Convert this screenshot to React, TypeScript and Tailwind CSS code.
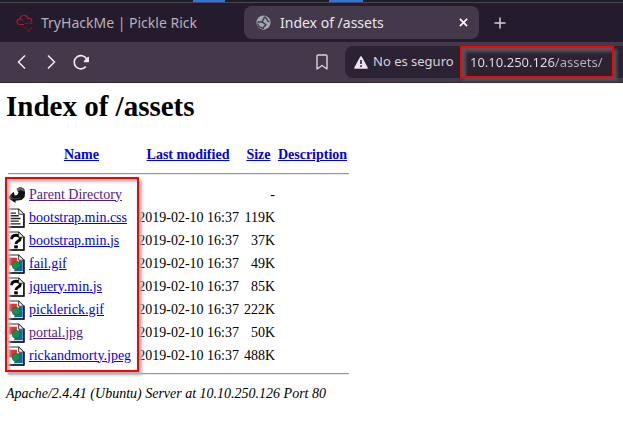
import React from "react";

type Kind = "back" | "text" | "unknown" | "image";

type Entry = {
  name: string;
  kind: Kind;
  modified?: string;
  size: string;
  visited?: boolean;
};

const stamp = "2019-02-10 16:37";

const entries: Entry[] = [
  { name: "Parent Directory", kind: "back", size: "-", visited: true },
  { name: "bootstrap.min.css", kind: "text", modified: stamp, size: "119K" },
  { name: "bootstrap.min.js", kind: "unknown", modified: stamp, size: "37K" },
  { name: "fail.gif", kind: "image", modified: stamp, size: "49K" },
  { name: "jquery.min.js", kind: "unknown", modified: stamp, size: "85K" },
  { name: "picklerick.gif", kind: "image", modified: stamp, size: "222K" },
  { name: "portal.jpg", kind: "image", modified: stamp, size: "50K", visited: true },
  { name: "rickandmorty.jpeg", kind: "image", modified: stamp, size: "488K" },
];

function FileIcon({ kind }: { kind: Kind }) {
  if (kind === "back") {
    return (
      <svg viewBox="0 0 20 22" className="block h-5 w-[18px]" aria-hidden="true">
        <path d="M11 4 15 2 19 4 20 8 19.5 13.5 16 16.5 9.5 17.5 9.5 20 0.5 14 7.5 7.5 8.5 11.5 11.5 11 13 9Z" fill="#111" />
        <path d="M10.5 4 14.5 2 18.5 4 19.5 7.5 15 5.5 12 7.5Z" fill="#666" />
        <path d="M12 9.5 14.5 7.5 19.5 8.5 19 13 16 15.5 11 16Z" fill="#111" />
        <path d="M2 14.2 8.5 15.2 15 14.5" fill="none" stroke="#555" strokeWidth="0.8" />
      </svg>
    );
  }
  return (
    <svg viewBox="0 0 20 22" className="block h-5 w-[18px]" aria-hidden="true">
      <path d="M1 1H13L18.8 6.8V21H1Z" fill="#fff" stroke="#333" strokeWidth="1.2" />
      <path d="M18.8 6V21.1H1" fill="none" stroke="#111" strokeWidth="1.6" />
      {kind === "text" && (
        <path d="M4 5.5H10M4 8.5H13M4 11.5H15M4 14.5H13M4 17.5H15" stroke="#222" strokeWidth="1.5" />
      )}
      {kind === "unknown" && (
        <>
          <path d="M5 9C5 3.2 14.8 3.2 14.8 8.2C14.8 11.2 10 11 10 14.2" fill="none" stroke="#000" strokeWidth="3.2" />
          <rect x="8" y="15.8" width="4" height="3.4" fill="#000" />
        </>
      )}
      {kind === "image" && (
        <>
          <rect x="2" y="4" width="9" height="8.5" fill="#ef2b33" />
          <path d="M13.5 7.5H17.5V19H7.5Z" fill="#1764b0" />
          <circle cx="10" cy="12.4" r="4.4" fill="#119447" stroke="#155c37" strokeWidth="0.6" />
        </>
      )}
      <path d="M13 1V6.8H18.8Z" fill="#fff" stroke="#222" strokeWidth="1" />
    </svg>
  );
}

function CloudLogo() {
  return (
    <svg viewBox="0 0 18 18" className="h-[18px] w-[18px] shrink-0" fill="none" stroke="#b51622" aria-hidden="true">
      <path d="M8 10.5H4C0 10.5 0.2 5.2 4 5.2C4.5 0.5 11 0.2 12 4.5C15 3.8 16.5 6 15.5 8" strokeWidth="1.2" />
      <path d="M4 5.2C6 4.8 6.8 5.8 7 7" strokeWidth="1" />
      <path d="M9 9.3H12M13 9.3H16.5M8.5 14H11M12 15.3H13.5M14 14.2H16.5M11 17H14" strokeWidth="1.1" strokeOpacity="0.75" />
    </svg>
  );
}

function Globe() {
  return (
    <svg viewBox="0 0 16 16" className="h-[15px] w-[15px] shrink-0" aria-hidden="true">
      <circle cx="8" cy="8" r="7.6" fill="#a2a7ae" />
      <path d="M10 1.8C6.5 3.2 9.8 4.8 7.3 5.6C6.5 6 7 7.2 5.5 7.4H1.7C3.8 7.8 8.2 6.6 8.4 9C8.6 10 10.5 9 10.6 10.4C10.4 12 7.6 11.8 7.6 14.2C4.2 13.8 2.2 11.6 1.7 9M10 1.8C10 4 12 3.8 12 5.2C11.8 6.8 13.4 6 14 7.6" fill="none" stroke="#43394b" strokeWidth="1.5" />
    </svg>
  );
}

const iconButton = "flex h-8 w-[30px] shrink-0 items-center justify-center text-[#f0edf2]";

function BrowserChrome() {
  return (
    <header className="bg-[#241b2d] font-['Noto_Sans',sans-serif] text-[#e9e5ec]">
      <div className="flex h-[3px] border-b border-[#4a484d] bg-[#1c1e27]">
        <div className="ml-[193px] w-8 bg-[#2776ee]" />
        <div className="ml-[104px] w-[34px] bg-[#2776ee]" />
      </div>
      <div className="flex h-[39px] items-center">
        <button type="button" className="flex h-[33px] w-[244px] shrink-0 items-center gap-[7px] pl-4 text-[14px] whitespace-nowrap text-[#b7b1bb]">
          <CloudLogo />
          TryHackMe | Pickle Rick
        </button>
        <div className="flex h-[33px] w-[235px] shrink-0 items-center rounded-lg bg-[#43394b] pr-2 pl-3">
          <button type="button" className="flex flex-1 items-center gap-[9px] text-[14px] whitespace-nowrap">
            <Globe />
            Index of /assets
          </button>
          <button type="button" aria-label="Close tab" className="flex h-4 w-4 items-center justify-center">
            <svg viewBox="0 0 10 10" className="h-[9px] w-[9px]" stroke="#fff" strokeWidth="1.8" aria-hidden="true">
              <path d="M1 1 9 9M9 1 1 9" />
            </svg>
          </button>
        </div>
        <button type="button" aria-label="New tab" className="ml-[11px] flex h-5 w-5 items-center justify-center">
          <svg viewBox="0 0 12 12" className="h-3 w-3" stroke="#d5d1d8" strokeWidth="1.5" aria-hidden="true">
            <path d="M6 0.5V11.5M0.5 6H11.5" />
          </svg>
        </button>
      </div>
      <div className="flex h-[41px] items-center border-b border-[#302b34] bg-[#43394b] pl-[6px]">
        <button type="button" aria-label="Back" className={iconButton}>
          <svg viewBox="0 0 9 14" className="h-[14px] w-[9px]" fill="none" stroke="currentColor" strokeWidth="1.5" aria-hidden="true">
            <path d="M8 0.5 1.5 7 8 13.5" />
          </svg>
        </button>
        <button type="button" aria-label="Forward" className={iconButton}>
          <svg viewBox="0 0 9 14" className="h-[14px] w-[9px]" fill="none" stroke="currentColor" strokeWidth="1.5" aria-hidden="true">
            <path d="M1 0.5 7.5 7 1 13.5" />
          </svg>
        </button>
        <button type="button" aria-label="Reload" className={iconButton}>
          <svg viewBox="0 0 16 16" className="h-4 w-4" fill="none" stroke="currentColor" strokeWidth="1.6" aria-hidden="true">
            <path d="M13.6 5A6.6 6.6 0 1 0 12.8 12.6" />
            <path d="M15.3 3.5V7.5H11.5Z" fill="currentColor" strokeLinejoin="round" />
          </svg>
        </button>
        <button type="button" aria-label="Bookmark" className={`${iconButton} ml-auto`}>
          <svg viewBox="0 0 12 16" className="h-4 w-3" fill="none" stroke="#d9d4dc" strokeWidth="1.4" strokeLinejoin="round" aria-hidden="true">
            <path d="M2 1H10Q11 1 11 2V15L6 11.5 1 15V2Q1 1 2 1Z" />
          </svg>
        </button>
        <div className="ml-2 flex h-8 w-[278px] shrink-0 items-center rounded-l-lg bg-[#2b2233] pl-[9px] text-[13px]">
          <svg viewBox="0 0 14 13" className="h-[13px] w-[14px] shrink-0" aria-hidden="true">
            <path d="M7 1 13 12H1Z" fill="#ece4f0" stroke="#ece4f0" strokeWidth="1.6" strokeLinejoin="round" />
            <path d="M7 4V8M7 9.3V11" stroke="#2b2233" strokeWidth="1.6" />
          </svg>
          <label htmlFor="address" className="ml-[5px] w-[87px] whitespace-nowrap text-[#d8d2dc]">
            No es seguro
          </label>
          <div className="h-8 w-[154px] border-2 border-[#fe0000] shadow-[3px_3px_3px_#56525a,inset_4px_4px_3px_#56525a]">
            <input
              id="address"
              type="text"
              defaultValue="10.10.250.126/assets/"
              className="h-full w-full bg-linear-to-r from-[#e6e2e8] from-[93px] to-[#b8b2bc] to-[93px] bg-clip-text pl-2 text-[13px] text-transparent outline-none"
            />
          </div>
        </div>
      </div>
    </header>
  );
}

const headLink = "text-[#0000ee] underline";

function Rule() {
  return (
    <tr>
      <td colSpan={5} className="h-2 p-0">
        <hr className="ml-[2px] h-[2px] border-t border-b border-t-[#999] border-b-[#e8e8e8]" />
      </td>
    </tr>
  );
}

export default function App() {
  return (
    <div className="bg-white text-black">
      <BrowserChrome />
      <main className="px-[6px] font-['Liberation_Serif',serif] text-[14px] leading-4">
        <h1 className="pt-[7px] text-[29px] leading-8 font-bold">Index of /assets</h1>
        <div className="relative mt-[23px] w-[343px]">
          <table className="w-full table-fixed border-collapse">
            <colgroup>
              <col className="w-[22px]" />
              <col className="w-[107px]" />
              <col className="w-[106px]" />
              <col className="w-[35px]" />
              <col />
            </colgroup>
            <thead>
              <tr className="h-[19px] whitespace-nowrap">
                <td className="p-0" />
                <th className="p-0"><a href="#name" className={headLink}>Name</a></th>
                <th className="p-0"><a href="#modified" className={headLink}>Last modified</a></th>
                <th className="p-0"><a href="#size" className={headLink}>Size</a></th>
                <th className="p-0"><a href="#description" className={headLink}>Description</a></th>
              </tr>
              <tr className="h-[6px]"><td colSpan={5} className="p-0" /></tr>
            </thead>
            <tbody>
              <Rule />
              <tr className="h-[5px]"><td colSpan={5} className="p-0" /></tr>
              {entries.map((entry) => (
                <tr key={entry.name} className="h-[23px] whitespace-nowrap">
                  <td className="py-0 pr-0 pl-px"><FileIcon kind={entry.kind} /></td>
                  <td className="p-0 pl-px">
                    <a href={`#${entry.name}`} className={entry.visited ? "text-[#551a8b] underline" : "text-[#0000ee] underline"}>
                      {entry.name}
                    </a>
                  </td>
                  <td className="p-0 pr-[2px] text-right">{entry.modified}</td>
                  <td className="p-0 pr-px text-right">{entry.size}</td>
                  <td className="p-0" />
                </tr>
              ))}
              <tr className="h-[3px]"><td colSpan={5} className="p-0" /></tr>
              <Rule />
            </tbody>
          </table>
          <div className="pointer-events-none absolute top-[32px] -left-px h-[195px] w-[134px] border-2 border-[#fe0000] shadow-[3px_3px_3px_#b5b5b5,inset_3px_3px_3px_#bdbdbd]" />
        </div>
        <address className="mt-2 pb-4 italic">Apache/2.4.41 (Ubuntu) Server at 10.10.250.126 Port 80</address>
      </main>
    </div>
  );
}
